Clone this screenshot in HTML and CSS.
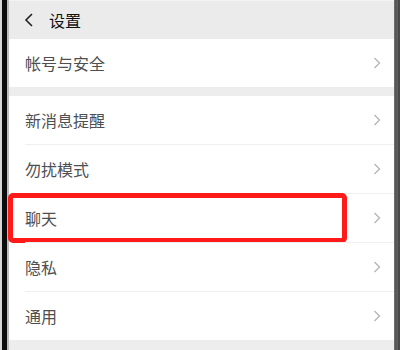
FILE: index.html
```html
<!DOCTYPE html>
<html lang="zh">
<head>
<meta charset="utf-8">
<link rel="stylesheet" href="styles.css">
</head>
<body>
<div class="device">
  <div class="frame-left"></div>
  <div class="screen">
    <div class="header">
      <svg class="back" width="12" height="14" viewBox="0 0 12 14"><path d="M9 1 L3 7 L9 13" fill="none" stroke="#222" stroke-width="1.6"/></svg>
      <span class="title">设置</span>
    </div>
    <div class="group">
      <div class="row"><span class="label">帐号与安全</span><svg class="chev" width="8" height="12" viewBox="0 0 8 12"><path d="M1.5 1 L6.5 6 L1.5 11" fill="none" stroke="#b4b4b4" stroke-width="1.3"/></svg></div>
    </div>
    <div class="group">
      <div class="row"><span class="label">新消息提醒</span><svg class="chev" width="8" height="12" viewBox="0 0 8 12"><path d="M1.5 1 L6.5 6 L1.5 11" fill="none" stroke="#b4b4b4" stroke-width="1.3"/></svg></div>
      <div class="row"><span class="label">勿扰模式</span><svg class="chev" width="8" height="12" viewBox="0 0 8 12"><path d="M1.5 1 L6.5 6 L1.5 11" fill="none" stroke="#b4b4b4" stroke-width="1.3"/></svg></div>
      <div class="row highlighted"><span class="label">聊天</span><svg class="chev" width="8" height="12" viewBox="0 0 8 12"><path d="M1.5 1 L6.5 6 L1.5 11" fill="none" stroke="#b4b4b4" stroke-width="1.3"/></svg><div class="mark"></div></div>
      <div class="row"><span class="label">隐私</span><svg class="chev" width="8" height="12" viewBox="0 0 8 12"><path d="M1.5 1 L6.5 6 L1.5 11" fill="none" stroke="#b4b4b4" stroke-width="1.3"/></svg></div>
      <div class="row"><span class="label">通用</span><svg class="chev" width="8" height="12" viewBox="0 0 8 12"><path d="M1.5 1 L6.5 6 L1.5 11" fill="none" stroke="#b4b4b4" stroke-width="1.3"/></svg></div>
    </div>
  </div>
  <div class="frame-right"></div>
</div>
</body>
</html>
```
FILE: styles.css
```css
html, body {
  margin: 0;
  padding: 0;
  width: 400px;
  height: 350px;
  overflow: hidden;
  background: #ededed;
}
.device {
  display: flex;
  width: 400px;
  height: 350px;
  font-family: "Noto Sans CJK SC", "Noto Sans", sans-serif;
}
.frame-left {
  width: 5px;
  flex: none;
  border-left: 2px solid #d8d8d8;
  border-right: 2px solid #bdbdbd;
  background: #0c0c0c;
}
.frame-right {
  width: 6px;
  flex: none;
  background: linear-gradient(to right, #7a7a7a 0, #4a4a4a 2px, #6a6a6a 3px, #3e3e3e 5px, #555 6px);
}
.screen {
  flex: 1;
  background: #ededed;
  position: relative;
}
.header {
  height: 39px;
  display: flex;
  align-items: center;
  background: #ebebeb;
  border-top: 1px solid #f4f4f4;
  box-sizing: border-box;
}
.back {
  margin-left: 14px;
  margin-right: 14px;
}
.title {
  font-size: 16px;
  color: #111;
  font-weight: 400;
  margin-top: -1px;
}
.group {
  background: #fff;
  margin-bottom: 9px;
}
.row {
  height: 48px;
  display: flex;
  align-items: center;
  justify-content: space-between;
  margin-left: 16px;
  padding-right: 13px;
  position: relative;
}
.row + .row {
  border-top: 1px solid #efefef;
}
.label {
  font-size: 16px;
  color: #4f4f4f;
}
.chev {
  width: 8px;
  height: 12px;
}
.mark {
  position: absolute;
  left: -17px;
  top: -1px;
  width: 329px;
  height: 40px;
  border: 5px solid #ff1a1a;
  border-radius: 5px;
}
```
